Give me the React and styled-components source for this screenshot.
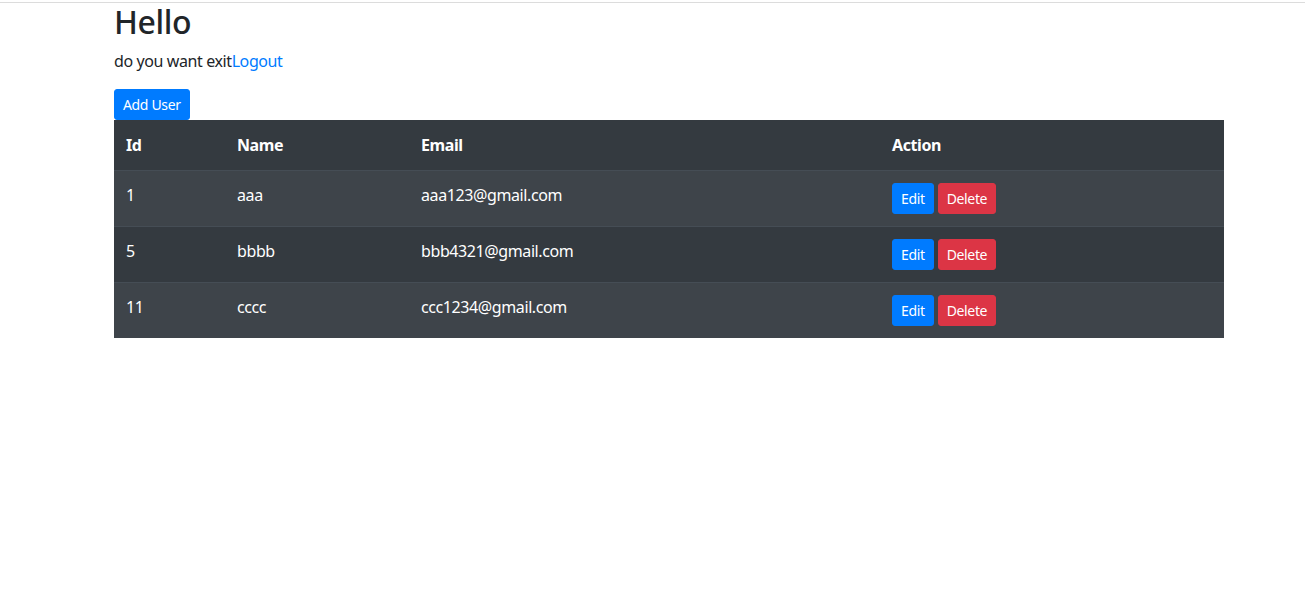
import React from 'react';
import styled, { createGlobalStyle } from 'styled-components';

const GlobalStyle = createGlobalStyle`
  * { box-sizing: border-box; }
  body {
    margin: 0;
    background: #fff;
    color: #212529;
    font-family: "Noto Sans", "Open Sans", Roboto, sans-serif;
    font-size: 16px;
    line-height: 1.5;
    letter-spacing: -0.025em;
  }
`;

const TopRule = styled.div`
  margin-top: 2px;
  height: 1px;
  background: #dcdcdc;
`;

const Container = styled.div`
  width: 1110px;
  margin-left: 114px;
`;

const Title = styled.h2`
  margin: 0 0 8px;
  font-size: 32px;
  font-weight: 500;
  line-height: 1.2;
`;

const Text = styled.p`
  margin: 0 0 16px;
`;

const Link = styled.a`
  color: #007bff;
  text-decoration: none;
`;

const Button = styled.button`
  display: inline-block;
  font-family: inherit;
  font-size: 14px;
  letter-spacing: -0.025em;
  line-height: 1.5;
  padding: 4px 8px;
  border: 1px solid ${p => p.$bg};
  border-radius: 3px;
  background: ${p => p.$bg};
  color: #fff;
  margin-right: ${p => p.$gap || 0}px;
  vertical-align: top;
`;

const Table = styled.table`
  width: 100%;
  border-collapse: collapse;
  background: #343a40;
  color: #fff;
`;

const HeadCell = styled.th`
  text-align: left;
  font-weight: 700;
  padding: 12px;
  height: 50px;
  width: ${p => p.$w}px;
`;

const Row = styled.tr`
  background: ${p => (p.$odd ? '#3e444a' : '#343a40')};
  border-top: 1px solid #454d55;
`;

const Cell = styled.td`
  padding: 12px;
  vertical-align: top;
`;

const users = [
  { id: 1, name: 'aaa', email: 'aaa123@gmail.com' },
  { id: 5, name: 'bbbb', email: 'bbb4321@gmail.com' },
  { id: 11, name: 'cccc', email: 'ccc1234@gmail.com' },
];

export default function App() {
  return (
    <>
      <GlobalStyle />
      <TopRule />
      <Container>
        <Title>Hello</Title>
        <Text>
          do you want exit<Link href="#">Logout</Link>
        </Text>
        <Button $bg="#007bff">Add User</Button>
        <Table>
          <thead>
            <tr>
              <HeadCell $w={111}>Id</HeadCell>
              <HeadCell $w={184}>Name</HeadCell>
              <HeadCell $w={471}>Email</HeadCell>
              <HeadCell>Action</HeadCell>
            </tr>
          </thead>
          <tbody>
            {users.map((u, i) => (
              <Row key={u.id} $odd={i % 2 === 0}>
                <Cell>{u.id}</Cell>
                <Cell>{u.name}</Cell>
                <Cell>{u.email}</Cell>
                <Cell>
                  <Button $bg="#007bff" $gap={4}>Edit</Button>
                  <Button $bg="#dc3545">Delete</Button>
                </Cell>
              </Row>
            ))}
          </tbody>
        </Table>
      </Container>
    </>
  );
}
